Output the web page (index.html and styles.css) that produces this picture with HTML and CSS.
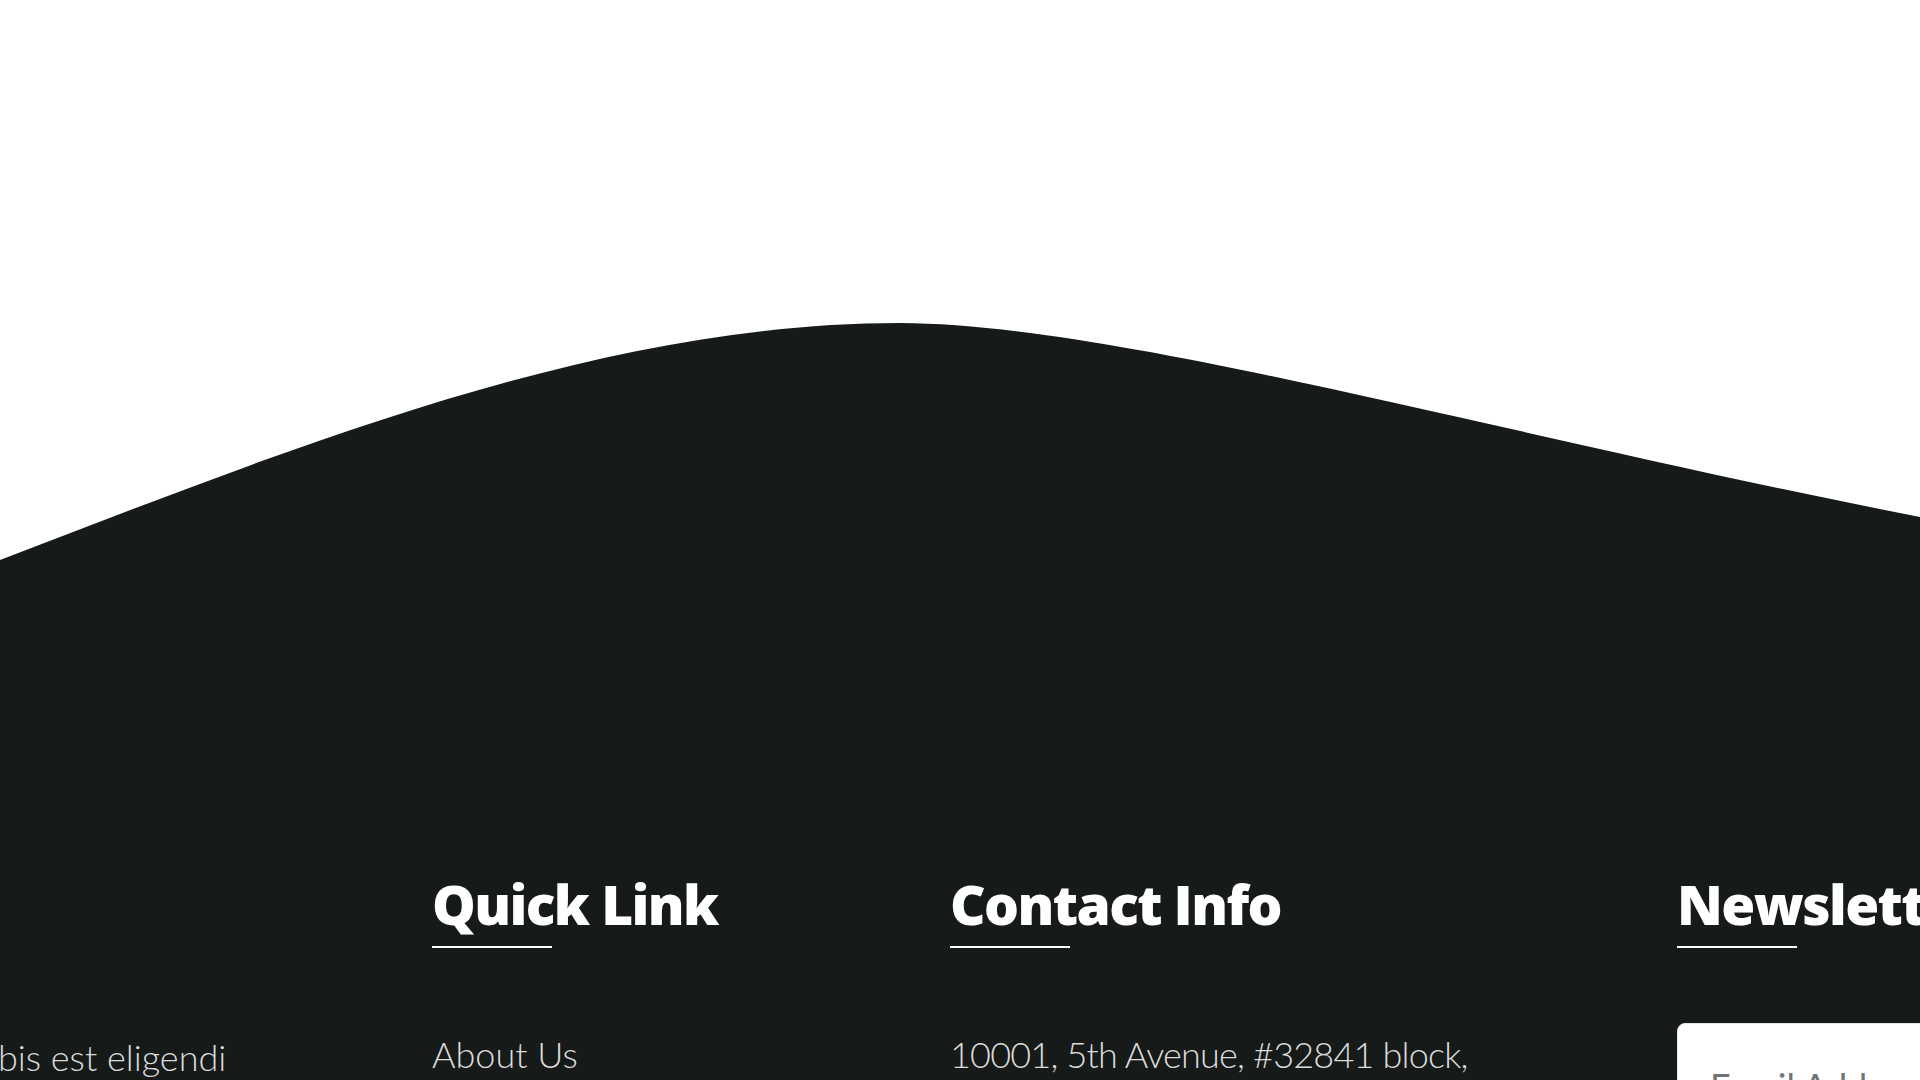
FILE: index.html
```html
<!DOCTYPE html>
<html lang="en">
<head>
<meta charset="utf-8">
<title>Footer</title>
<link rel="stylesheet" href="styles.css">
</head>
<body>
<div class="page">
  <div class="page-top"></div>
  <footer class="footer">
    <svg class="wave" viewBox="0 0 1920 240" preserveAspectRatio="none" aria-hidden="true">
      <path d="M0,240 C300,125 600,3 900,3 C1120,4 1500,115 1920,197 L1920,240 Z" fill="#161a19"/>
    </svg>
    <div class="footer-body">
      <div class="footer-grid">
        <div class="col col-about">
          <p class="about-text">nobis est eligendi optio cumque nihil impedit quo minus id quod maxime placeat facere possimus.</p>
        </div>
        <div class="col">
          <h3 class="col-title">Quick Link</h3>
          <ul class="links">
            <li><a href="#">About Us</a></li>
            <li><a href="#">Services</a></li>
            <li><a href="#">Projects</a></li>
            <li><a href="#">Contact</a></li>
          </ul>
        </div>
        <div class="col">
          <h3 class="col-title">Contact Info</h3>
          <p class="contact-text">10001, 5th Avenue, #32841 block, New York, USA</p>
        </div>
        <div class="col">
          <h3 class="col-title">Newsletter</h3>
          <form class="newsletter">
            <input class="email" type="email" placeholder="Email Address">
          </form>
        </div>
      </div>
    </div>
  </footer>
</div>
</body>
</html>
```
FILE: styles.css
```css
html, body {
  margin: 0;
  padding: 0;
  background: #ffffff;
}

.page {
  width: 1920px;
  height: 1080px;
  overflow: hidden;
  font-family: "Lato", "Liberation Sans", sans-serif;
}

.page-top {
  height: 320px;
  background: #ffffff;
}

.footer {
  display: flex;
  flex-direction: column;
}

.wave {
  display: block;
  width: 1920px;
  height: 240px;
}

.footer-body {
  background: #161a19;
  padding-top: 311px;
  height: 1000px;
}

.footer-grid {
  display: grid;
  grid-template-columns: 474px 518px 727px 581px;
  margin-left: -42px;
  width: 2300px;
}

.col-title {
  margin: 0;
  font-family: "Open Sans", "Lato", sans-serif;
  font-weight: 800;
  font-size: 55px;
  line-height: 66px;
  color: #ffffff;
  letter-spacing: -1.6px;
}

.col-title::after {
  content: "";
  display: block;
  width: 120px;
  height: 2px;
  margin-top: 9px;
  background: #ffffff;
}

.links {
  list-style: none;
  margin: 79px 0 0;
  padding: 0;
}

.links li {
  font-size: 36px;
  line-height: 54px;
  font-weight: 300;
}

.links a {
  color: #dcdcdc;
  text-decoration: none;
}

.contact-text {
  margin: 79px 0 0;
  font-size: 36px;
  line-height: 54px;
  font-weight: 300;
  color: #dcdcdc;
  letter-spacing: -0.8px;
  max-width: 560px;
}

.col-about {
  padding-top: 159px;
}

.about-text {
  margin: 0;
  font-size: 36px;
  line-height: 54px;
  font-weight: 300;
  color: #dcdcdc;
  max-width: 300px;
}

.newsletter {
  margin-top: 75px;
}

.email {
  box-sizing: border-box;
  width: 560px;
  padding: 40px 32px;
  font-family: "Lato", sans-serif;
  font-size: 36px;
  font-weight: 400;
  color: #333;
  background: #ffffff;
  border: 1px solid #e6e6e6;
  border-radius: 8px;
  outline: none;
}

.email::placeholder {
  color: #6f7479;
}
```
